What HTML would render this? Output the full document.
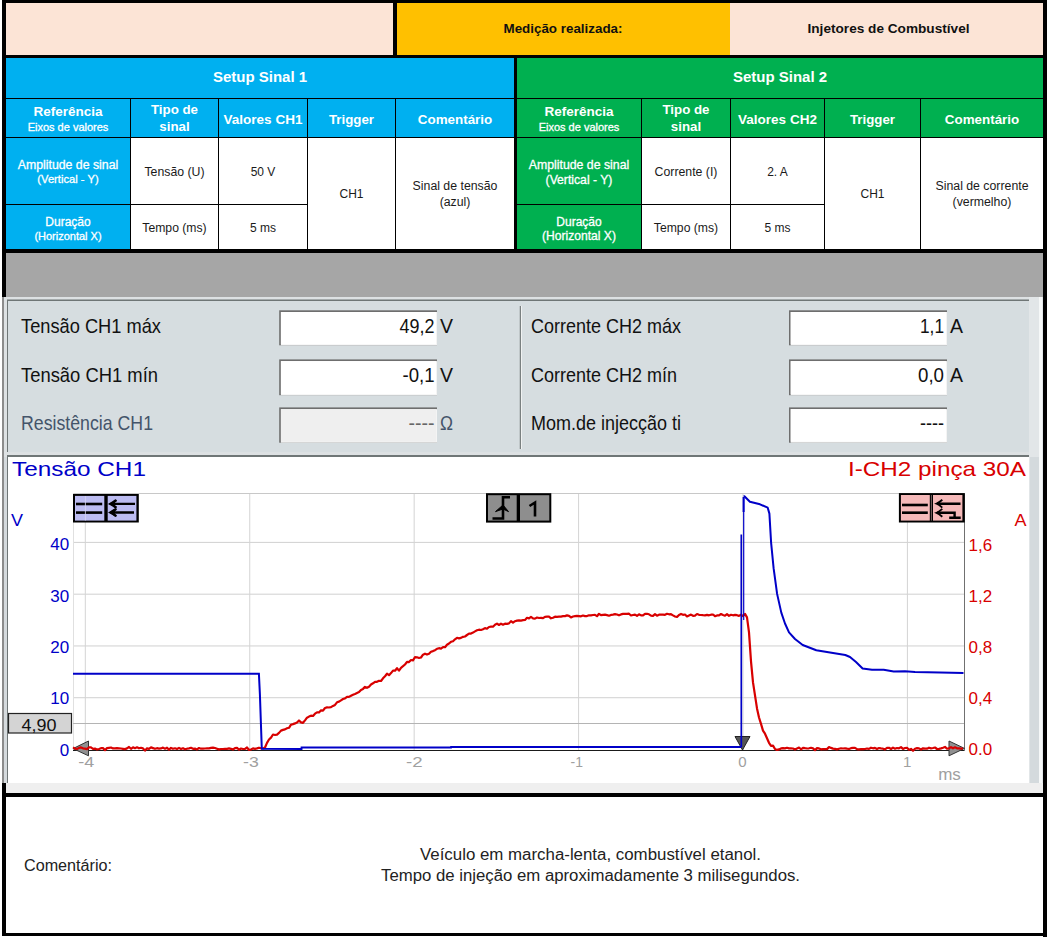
<!DOCTYPE html>
<html><head><meta charset="utf-8"><style>html,body{margin:0;padding:0;background:#fff}body{width:1048px;height:938px;overflow:hidden}svg{display:block;font-family:"Liberation Sans",sans-serif}</style></head><body>
<svg width="1048" height="938" viewBox="0 0 1048 938">
<rect x="2" y="0" width="1045" height="253" fill="#000" />
<rect x="6" y="3" width="387" height="52" fill="#fce4d6" />
<rect x="397" y="3" width="333" height="52" fill="#ffc000" />
<rect x="730" y="3" width="313" height="52" fill="#fce4d6" />
<text x="503.5" y="33" font-size="13.4" fill="#111" font-weight="bold" text-anchor="start" textLength="119" lengthAdjust="spacingAndGlyphs" >Medição realizada:</text>
<text x="807.5" y="33" font-size="13.6" fill="#111" font-weight="bold" text-anchor="start" textLength="162" lengthAdjust="spacingAndGlyphs" >Injetores de Combustível</text>
<rect x="6" y="58" width="508" height="40" fill="#00b0f0" />
<text x="260.0" y="82" font-size="15" fill="#fff" font-weight="bold" text-anchor="middle" >Setup Sinal 1</text>
<rect x="6" y="99" width="124" height="38" fill="#00b0f0" />
<rect x="6" y="138" width="124" height="66" fill="#00b0f0" />
<rect x="6" y="205" width="124" height="44" fill="#00b0f0" />
<rect x="131" y="99" width="87" height="38" fill="#00b0f0" />
<rect x="131" y="138" width="87" height="66" fill="#fff" />
<rect x="131" y="205" width="87" height="44" fill="#fff" />
<rect x="219" y="99" width="88" height="38" fill="#00b0f0" />
<rect x="219" y="138" width="88" height="66" fill="#fff" />
<rect x="219" y="205" width="88" height="44" fill="#fff" />
<rect x="308" y="99" width="87" height="38" fill="#00b0f0" />
<rect x="308" y="138" width="87" height="111" fill="#fff" />
<rect x="396" y="99" width="118" height="38" fill="#00b0f0" />
<rect x="396" y="138" width="118" height="111" fill="#fff" />
<text x="68.0" y="116" font-size="13.5" fill="#fff" font-weight="bold" text-anchor="middle" >Referência</text>
<text x="68.0" y="130.5" font-size="11" fill="#fff" text-anchor="middle" stroke="#fff" stroke-width="0.3">Eixos de valores</text>
<text x="174.5" y="114" font-size="13.3" fill="#fff" font-weight="bold" text-anchor="middle" >Tipo de</text>
<text x="174.5" y="130.5" font-size="13.3" fill="#fff" font-weight="bold" text-anchor="middle" >sinal</text>
<text x="263.0" y="123.5" font-size="13.5" fill="#fff" font-weight="bold" text-anchor="middle" >Valores CH1</text>
<text x="351.5" y="123.5" font-size="13.3" fill="#fff" font-weight="bold" text-anchor="middle" >Trigger</text>
<text x="455.0" y="123.5" font-size="13.4" fill="#fff" font-weight="bold" text-anchor="middle" >Comentário</text>
<text x="68.0" y="169" font-size="12.3" fill="#fff" text-anchor="middle" stroke="#fff" stroke-width="0.3">Amplitude de sinal</text>
<text x="68.0" y="183" font-size="11.2" fill="#fff" text-anchor="middle" stroke="#fff" stroke-width="0.3">(Vertical - Y)</text>
<text x="68.0" y="225.7" font-size="12" fill="#fff" text-anchor="middle" stroke="#fff" stroke-width="0.3">Duração</text>
<text x="68.0" y="239.6" font-size="11" fill="#fff" text-anchor="middle" stroke="#fff" stroke-width="0.3">(Horizontal X)</text>
<text x="174.5" y="176" font-size="12.3" fill="#1a1a1a" text-anchor="middle" >Tensão (U)</text>
<text x="174.5" y="232" font-size="12.2" fill="#1a1a1a" text-anchor="middle" >Tempo (ms)</text>
<text x="263.0" y="176" font-size="12" fill="#1a1a1a" text-anchor="middle" >50 V</text>
<text x="263.0" y="232" font-size="12" fill="#1a1a1a" text-anchor="middle" >5 ms</text>
<text x="351.5" y="198" font-size="12" fill="#1a1a1a" text-anchor="middle" >CH1</text>
<text x="455.0" y="190" font-size="12.3" fill="#1a1a1a" text-anchor="middle" >Sinal de tensão</text>
<text x="455.0" y="206" font-size="12.3" fill="#1a1a1a" text-anchor="middle" >(azul)</text>
<rect x="517" y="58" width="526" height="40" fill="#00b050" />
<text x="780.0" y="82" font-size="15" fill="#fff" font-weight="bold" text-anchor="middle" >Setup Sinal 2</text>
<rect x="517" y="99" width="124" height="38" fill="#00b050" />
<rect x="517" y="138" width="124" height="66" fill="#00b050" />
<rect x="517" y="205" width="124" height="44" fill="#00b050" />
<rect x="642" y="99" width="88" height="38" fill="#00b050" />
<rect x="642" y="138" width="88" height="66" fill="#fff" />
<rect x="642" y="205" width="88" height="44" fill="#fff" />
<rect x="731" y="99" width="93" height="38" fill="#00b050" />
<rect x="731" y="138" width="93" height="66" fill="#fff" />
<rect x="731" y="205" width="93" height="44" fill="#fff" />
<rect x="825" y="99" width="95" height="38" fill="#00b050" />
<rect x="825" y="138" width="95" height="111" fill="#fff" />
<rect x="921" y="99" width="122" height="38" fill="#00b050" />
<rect x="921" y="138" width="122" height="111" fill="#fff" />
<text x="579.0" y="116" font-size="13.5" fill="#fff" font-weight="bold" text-anchor="middle" >Referência</text>
<text x="579.0" y="130.5" font-size="11" fill="#fff" text-anchor="middle" stroke="#fff" stroke-width="0.3">Eixos de valores</text>
<text x="686.0" y="114" font-size="13.3" fill="#fff" font-weight="bold" text-anchor="middle" >Tipo de</text>
<text x="686.0" y="130.5" font-size="13.3" fill="#fff" font-weight="bold" text-anchor="middle" >sinal</text>
<text x="777.5" y="123.5" font-size="13.5" fill="#fff" font-weight="bold" text-anchor="middle" >Valores CH2</text>
<text x="872.5" y="123.5" font-size="13.3" fill="#fff" font-weight="bold" text-anchor="middle" >Trigger</text>
<text x="982.0" y="123.5" font-size="13.4" fill="#fff" font-weight="bold" text-anchor="middle" >Comentário</text>
<text x="579.0" y="169" font-size="12.3" fill="#fff" text-anchor="middle" stroke="#fff" stroke-width="0.3">Amplitude de sinal</text>
<text x="579.0" y="184.2" font-size="12.2" fill="#fff" text-anchor="middle" stroke="#fff" stroke-width="0.3">(Vertical - Y)</text>
<text x="579.0" y="225.7" font-size="12" fill="#fff" text-anchor="middle" stroke="#fff" stroke-width="0.3">Duração</text>
<text x="579.0" y="240" font-size="12.1" fill="#fff" text-anchor="middle" stroke="#fff" stroke-width="0.3">(Horizontal X)</text>
<text x="686.0" y="176" font-size="12.3" fill="#1a1a1a" text-anchor="middle" >Corrente (I)</text>
<text x="686.0" y="232" font-size="12.2" fill="#1a1a1a" text-anchor="middle" >Tempo (ms)</text>
<text x="777.5" y="176" font-size="12" fill="#1a1a1a" text-anchor="middle" >2. A</text>
<text x="777.5" y="232" font-size="12" fill="#1a1a1a" text-anchor="middle" >5 ms</text>
<text x="872.5" y="198" font-size="12" fill="#1a1a1a" text-anchor="middle" >CH1</text>
<text x="982.0" y="190" font-size="12.3" fill="#1a1a1a" text-anchor="middle" >Sinal de corrente</text>
<text x="982.0" y="206" font-size="12.3" fill="#1a1a1a" text-anchor="middle" >(vermelho)</text>
<rect x="2" y="253" width="4" height="44" fill="#000" />
<rect x="1043" y="253" width="4" height="44" fill="#000" />
<rect x="6" y="253" width="1037" height="44" fill="#a6a6a6" />
<rect x="1043" y="297" width="4" height="640" fill="#000" />
<rect x="2" y="783" width="4" height="153" fill="#000" />
<rect x="2" y="793" width="1045" height="4" fill="#000" />
<rect x="2" y="933" width="1045" height="3" fill="#000" />
<rect x="2" y="297" width="1041" height="160" fill="#dde1e3" />
<rect x="2" y="297" width="2" height="486" fill="#8c8c8c" />
<rect x="4" y="457" width="3" height="326" fill="#d5dadd" />
<rect x="7" y="299.5" width="1022" height="152.5" fill="#6f7676" />
<rect x="8" y="301" width="1021" height="151" fill="#d6dde0" />
<rect x="1029" y="297" width="14" height="486" fill="#e2e6e8" />
<rect x="1039" y="297" width="3" height="486" fill="#f6f8f8" />
<rect x="1030" y="457" width="9" height="326" fill="#d4dadd" />
<rect x="279.2" y="310.3" width="157.8" height="35" fill="#6e6e6e" />
<rect x="280.9" y="312.0" width="156.10000000000002" height="33.3" fill="#f4f4f4" />
<rect x="280.9" y="312.0" width="155.10000000000002" height="32.3" fill="#fff" />
<rect x="789" y="310.3" width="158" height="35" fill="#6e6e6e" />
<rect x="790.7" y="312.0" width="156.3" height="33.3" fill="#f4f4f4" />
<rect x="790.7" y="312.0" width="155.3" height="32.3" fill="#fff" />
<rect x="279.2" y="359.4" width="157.8" height="35.8" fill="#6e6e6e" />
<rect x="280.9" y="361.09999999999997" width="156.10000000000002" height="34.099999999999994" fill="#f4f4f4" />
<rect x="280.9" y="361.09999999999997" width="155.10000000000002" height="33.099999999999994" fill="#fff" />
<rect x="789" y="359.4" width="158" height="35.8" fill="#6e6e6e" />
<rect x="790.7" y="361.09999999999997" width="156.3" height="34.099999999999994" fill="#f4f4f4" />
<rect x="790.7" y="361.09999999999997" width="155.3" height="33.099999999999994" fill="#fff" />
<rect x="279.2" y="407.4" width="157.8" height="35.3" fill="#6e6e6e" />
<rect x="280.9" y="409.09999999999997" width="156.10000000000002" height="33.599999999999994" fill="#f4f4f4" />
<rect x="280.9" y="409.09999999999997" width="155.10000000000002" height="32.599999999999994" fill="#efefef" />
<rect x="789" y="407.4" width="158" height="35.3" fill="#6e6e6e" />
<rect x="790.7" y="409.09999999999997" width="156.3" height="33.599999999999994" fill="#f4f4f4" />
<rect x="790.7" y="409.09999999999997" width="155.3" height="32.599999999999994" fill="#fff" />
<line x1="520.5" y1="306" x2="520.5" y2="449" stroke="#7a8080" stroke-width="1.5" />
<line x1="521.5" y1="306" x2="521.5" y2="449" stroke="#f0f2f2" stroke-width="1" />
<text x="21" y="333" font-size="21" fill="#111" text-anchor="start" textLength="140" lengthAdjust="spacingAndGlyphs" >Tensão CH1 máx</text>
<text x="21" y="381.7" font-size="21" fill="#111" text-anchor="start" textLength="137" lengthAdjust="spacingAndGlyphs" >Tensão CH1 mín</text>
<text x="21" y="429.8" font-size="21" fill="#44546a" text-anchor="start" textLength="132" lengthAdjust="spacingAndGlyphs" >Resistência CH1</text>
<text x="434.5" y="333" font-size="21" fill="#111" text-anchor="end" textLength="35" lengthAdjust="spacingAndGlyphs" >49,2</text>
<text x="440" y="333" font-size="21" fill="#111" text-anchor="start" textLength="13" lengthAdjust="spacingAndGlyphs" >V</text>
<text x="434.5" y="381.7" font-size="21" fill="#111" text-anchor="end" textLength="32" lengthAdjust="spacingAndGlyphs" >-0,1</text>
<text x="440" y="381.7" font-size="21" fill="#111" text-anchor="start" textLength="13" lengthAdjust="spacingAndGlyphs" >V</text>
<text x="434.5" y="429.8" font-size="21" fill="#666" text-anchor="end" textLength="26" lengthAdjust="spacingAndGlyphs" >----</text>
<text x="440" y="429.8" font-size="21" fill="#44546a" text-anchor="start" textLength="13" lengthAdjust="spacingAndGlyphs" >Ω</text>
<text x="531" y="332.6" font-size="21" fill="#111" text-anchor="start" textLength="150" lengthAdjust="spacingAndGlyphs" >Corrente CH2 máx</text>
<text x="531" y="381.5" font-size="21" fill="#111" text-anchor="start" textLength="146" lengthAdjust="spacingAndGlyphs" >Corrente CH2 mín</text>
<text x="531" y="429.6" font-size="21" fill="#111" text-anchor="start" textLength="150" lengthAdjust="spacingAndGlyphs" >Mom.de injecção ti</text>
<text x="944" y="332.6" font-size="21" fill="#111" text-anchor="end" textLength="24" lengthAdjust="spacingAndGlyphs" >1,1</text>
<text x="950" y="332.6" font-size="21" fill="#111" text-anchor="start" textLength="13" lengthAdjust="spacingAndGlyphs" >A</text>
<text x="944" y="381.5" font-size="21" fill="#111" text-anchor="end" textLength="26" lengthAdjust="spacingAndGlyphs" >0,0</text>
<text x="950" y="381.5" font-size="21" fill="#111" text-anchor="start" textLength="13" lengthAdjust="spacingAndGlyphs" >A</text>
<text x="944" y="429.6" font-size="21" fill="#111" text-anchor="end" textLength="24" lengthAdjust="spacingAndGlyphs" >----</text>
<rect x="7" y="455" width="1022" height="2" fill="#6f7676" />
<rect x="7" y="455" width="1" height="328" fill="#6f7676" />
<rect x="8" y="457" width="1021" height="326" fill="#fff" />
<rect x="6" y="783" width="1037" height="10" fill="#efefef" />
<line x1="73" y1="697.725" x2="964.5" y2="697.725" stroke="#d0d0d0" stroke-width="1" />
<line x1="73" y1="645.95" x2="964.5" y2="645.95" stroke="#d0d0d0" stroke-width="1" />
<line x1="73" y1="594.175" x2="964.5" y2="594.175" stroke="#d0d0d0" stroke-width="1" />
<line x1="73" y1="542.4" x2="964.5" y2="542.4" stroke="#d0d0d0" stroke-width="1" />
<line x1="85.32000000000005" y1="493.5" x2="85.32000000000005" y2="750.3" stroke="#d4d4d4" stroke-width="1" />
<line x1="249.74" y1="493.5" x2="249.74" y2="750.3" stroke="#d4d4d4" stroke-width="1" />
<line x1="414.16" y1="493.5" x2="414.16" y2="750.3" stroke="#d4d4d4" stroke-width="1" />
<line x1="578.58" y1="493.5" x2="578.58" y2="750.3" stroke="#d4d4d4" stroke-width="1" />
<line x1="743.0" y1="493.5" x2="743.0" y2="750.3" stroke="#d4d4d4" stroke-width="1" />
<line x1="907.42" y1="493.5" x2="907.42" y2="750.3" stroke="#d4d4d4" stroke-width="1" />
<line x1="73" y1="493.5" x2="964.5" y2="493.5" stroke="#c8c8c8" stroke-width="1" />
<line x1="73.5" y1="493.5" x2="73.5" y2="750.3" stroke="#e0e0e0" stroke-width="1" />
<line x1="73" y1="723.5" x2="964.5" y2="723.5" stroke="#b4b4b4" stroke-width="1" />
<line x1="964.5" y1="493.5" x2="964.5" y2="750.3" stroke="#707070" stroke-width="1" />
<line x1="73" y1="750.5" x2="964.5" y2="750.5" stroke="#1a1a1a" stroke-width="1.2" />
<text x="69.2" y="755.5" font-size="17" fill="#0000c8" text-anchor="end" >0</text>
<text x="69.2" y="704.3" font-size="17" fill="#0000c8" text-anchor="end" >10</text>
<text x="69.2" y="653" font-size="17" fill="#0000c8" text-anchor="end" >20</text>
<text x="69.2" y="601.8" font-size="17" fill="#0000c8" text-anchor="end" >30</text>
<text x="69.2" y="550.3" font-size="17" fill="#0000c8" text-anchor="end" >40</text>
<text x="11" y="526" font-size="16" fill="#0000c8" text-anchor="start" textLength="12" lengthAdjust="spacingAndGlyphs" >V</text>
<text x="968.5" y="755.3" font-size="17" fill="#d80000" text-anchor="start" >0.0</text>
<text x="968.5" y="704.13" font-size="17" fill="#d80000" text-anchor="start" >0,4</text>
<text x="968.5" y="652.9599999999999" font-size="17" fill="#d80000" text-anchor="start" >0,8</text>
<text x="968.5" y="601.79" font-size="17" fill="#d80000" text-anchor="start" >1,2</text>
<text x="968.5" y="550.6199999999999" font-size="17" fill="#d80000" text-anchor="start" >1,6</text>
<text x="1014.5" y="526" font-size="16" fill="#d80000" text-anchor="start" textLength="12" lengthAdjust="spacingAndGlyphs" >A</text>
<text x="86.2" y="766.5" font-size="15" fill="#a0a0a0" text-anchor="middle" textLength="16" lengthAdjust="spacingAndGlyphs" >-4</text>
<text x="250.9" y="766.5" font-size="15" fill="#a0a0a0" text-anchor="middle" textLength="15.7" lengthAdjust="spacingAndGlyphs" >-3</text>
<text x="414.3" y="766.5" font-size="15" fill="#a0a0a0" text-anchor="middle" textLength="16.6" lengthAdjust="spacingAndGlyphs" >-2</text>
<text x="576.8" y="766.5" font-size="15" fill="#a0a0a0" text-anchor="middle" textLength="12.4" lengthAdjust="spacingAndGlyphs" >-1</text>
<text x="742.4" y="766.5" font-size="15" fill="#a0a0a0" text-anchor="middle" >0</text>
<text x="907.2" y="766.5" font-size="15" fill="#a0a0a0" text-anchor="middle" >1</text>
<text x="949.5" y="779.5" font-size="17" fill="#a0a0a0" text-anchor="middle" >ms</text>
<text x="12" y="476" font-size="21" fill="#0000c8" text-anchor="start" textLength="134" lengthAdjust="spacingAndGlyphs" >Tensão CH1</text>
<text x="1026" y="476" font-size="21" fill="#d80000" text-anchor="end" textLength="178" lengthAdjust="spacingAndGlyphs" >I-CH2 pinça 30A</text>
<path d="M73,748.6 L88.5,741 L88.5,755.8 Z" fill="#909090" stroke="#333" stroke-width="1"/>
<path d="M949,741 L964.5,748.4 L949,755.8 Z" fill="#909090" stroke="#333" stroke-width="1"/>
<path d="M735,736.5 L750,736.5 L742.5,750 Z" fill="#555" stroke="#222" stroke-width="1"/>
<path d="M73.0,747.4 L75.0,748.6 L77.0,749.0 L79.0,747.9 L81.0,747.4 L83.0,748.3 L85.0,748.6 L87.0,749.1 L89.0,747.4 L91.0,747.4 L93.0,748.8 L95.0,748.6 L97.0,749.4 L99.0,749.0 L101.0,748.2 L103.0,748.1 L105.0,750.1 L107.0,748.1 L109.0,747.8 L111.0,747.5 L113.0,748.4 L115.0,748.4 L117.0,748.1 L119.0,748.3 L121.0,748.5 L123.0,748.8 L125.0,749.1 L127.0,748.4 L129.0,747.0 L131.0,748.8 L133.0,747.3 L135.0,748.2 L137.0,747.3 L139.0,748.3 L141.0,747.8 L143.0,748.4 L145.0,750.6 L147.0,748.3 L149.0,748.9 L151.0,747.4 L153.0,748.1 L155.0,748.8 L157.0,748.2 L159.0,748.6 L161.0,748.4 L163.0,747.6 L165.0,748.7 L167.0,747.7 L169.0,749.6 L171.0,747.9 L173.0,748.8 L175.0,748.3 L177.0,749.0 L179.0,747.9 L181.0,749.0 L183.0,748.2 L185.0,749.2 L187.0,748.7 L189.0,748.4 L191.0,747.8 L193.0,748.8 L195.0,748.6 L197.0,749.4 L199.0,748.0 L201.0,748.7 L203.0,748.7 L205.0,748.5 L207.0,748.4 L209.0,748.4 L211.0,747.9 L213.0,747.6 L215.0,748.0 L217.0,748.7 L219.0,749.4 L221.0,749.0 L223.0,749.0 L225.0,748.8 L227.0,748.8 L229.0,748.4 L231.0,748.8 L233.0,749.5 L235.0,748.1 L237.0,747.8 L239.0,749.7 L241.0,748.5 L243.0,749.0 L245.0,748.9 L247.0,747.5 L249.0,750.0 L251.0,749.5 L253.0,748.4 L255.0,748.8 L257.0,748.4 L259.0,747.7 L261.0,748.2 L263.0,748.5 L265.0,747.5 L267.0,742.9 L269.0,739.5 L271.0,737.6 L273.0,734.5 L275.0,735.0 L277.0,734.6 L279.0,732.9 L281.0,730.6 L283.0,729.9 L285.0,729.4 L287.0,728.3 L289.0,727.8 L291.0,724.7 L293.0,724.1 L295.0,723.4 L297.0,722.5 L299.0,720.5 L301.0,722.4 L303.0,722.8 L305.0,720.4 L307.0,717.7 L309.0,716.6 L311.0,715.7 L313.0,716.0 L315.0,713.7 L317.0,712.4 L319.0,712.4 L321.0,710.3 L323.0,710.7 L325.0,708.0 L327.0,707.4 L329.0,707.5 L331.0,707.2 L333.0,705.9 L335.0,704.9 L337.0,702.3 L339.0,701.6 L341.0,700.3 L343.0,699.0 L345.0,698.4 L347.0,696.9 L349.0,696.9 L351.0,695.7 L353.0,694.7 L355.0,693.9 L357.0,692.9 L359.0,692.0 L361.0,689.9 L363.0,688.9 L365.0,686.9 L367.0,687.8 L369.0,686.7 L371.0,684.5 L373.0,683.3 L375.0,681.8 L377.0,681.8 L379.0,680.8 L381.0,681.0 L383.0,678.3 L385.0,676.2 L387.0,673.7 L389.0,675.2 L391.0,673.1 L393.0,670.6 L395.0,670.7 L397.0,668.2 L399.0,670.6 L401.0,667.8 L403.0,666.2 L405.0,664.5 L407.0,661.9 L409.0,662.1 L411.0,660.0 L413.0,660.3 L415.0,657.2 L417.0,657.3 L419.0,658.0 L421.0,657.5 L423.0,654.7 L425.0,653.7 L427.0,654.6 L429.0,653.8 L431.0,651.7 L433.0,651.1 L435.0,650.2 L437.0,648.8 L439.0,648.2 L441.0,648.6 L443.0,647.2 L445.0,647.2 L447.0,644.7 L449.0,643.5 L451.0,641.8 L453.0,641.2 L455.0,639.3 L457.0,637.8 L459.0,638.4 L461.0,637.9 L463.0,636.8 L465.0,636.5 L467.0,635.0 L469.0,633.7 L471.0,633.6 L473.0,632.6 L475.0,631.4 L477.0,630.3 L479.0,629.7 L481.0,630.0 L483.0,629.3 L485.0,628.1 L487.0,628.7 L489.0,627.0 L491.0,626.7 L493.0,626.7 L495.0,624.8 L497.0,623.6 L499.0,625.0 L501.0,623.7 L503.0,624.7 L505.0,623.7 L507.0,623.9 L509.0,623.4 L511.0,621.1 L513.0,622.7 L515.0,621.2 L517.0,620.6 L519.0,620.3 L521.0,620.6 L523.0,620.2 L525.0,619.9 L527.0,617.8 L529.0,618.4 L531.0,616.9 L533.0,618.3 L535.0,618.6 L537.0,617.5 L539.0,618.0 L541.0,617.8 L543.0,618.2 L545.0,616.8 L547.0,616.7 L549.0,616.6 L551.0,618.3 L553.0,617.7 L555.0,616.7 L557.0,616.8 L559.0,616.6 L561.0,616.6 L563.0,616.2 L565.0,616.1 L567.0,615.4 L569.0,615.8 L571.0,617.4 L573.0,616.5 L575.0,616.2 L577.0,615.9 L579.0,616.1 L581.0,616.3 L583.0,615.5 L585.0,616.1 L587.0,616.1 L589.0,615.3 L591.0,615.3 L593.0,615.0 L595.0,614.9 L597.0,616.2 L599.0,613.8 L601.0,615.2 L603.0,614.8 L605.0,614.7 L607.0,615.1 L609.0,615.7 L611.0,614.9 L613.0,614.6 L615.0,614.2 L617.0,614.5 L619.0,615.3 L621.0,614.4 L623.0,613.9 L625.0,613.8 L627.0,613.9 L629.0,613.7 L631.0,615.5 L633.0,615.0 L635.0,614.6 L637.0,615.8 L639.0,614.3 L641.0,615.4 L643.0,615.4 L645.0,613.8 L647.0,613.8 L649.0,614.3 L651.0,615.6 L653.0,615.8 L655.0,614.1 L657.0,615.7 L659.0,614.7 L661.0,614.7 L663.0,614.6 L665.0,614.8 L667.0,613.8 L669.0,614.3 L671.0,614.2 L673.0,615.4 L675.0,616.5 L677.0,617.0 L679.0,614.9 L681.0,613.9 L683.0,614.8 L685.0,614.5 L687.0,616.5 L689.0,615.5 L691.0,614.6 L693.0,615.8 L695.0,615.6 L697.0,614.0 L699.0,614.8 L701.0,615.0 L703.0,615.2 L705.0,615.3 L707.0,614.9 L709.0,615.3 L711.0,614.7 L713.0,614.5 L715.0,616.2 L717.0,615.4 L719.0,615.4 L721.0,614.0 L723.0,615.0 L725.0,615.7 L727.0,614.2 L729.0,615.8 L731.0,614.8 L733.0,615.3 L735.0,614.9 L737.0,615.2 L739.0,615.9 L741.0,614.7 L743.0,616.1 L745.0,613.9 L747.0,617.4 L749.0,632.3 L751.0,661.4 L753.0,682.4 L755.0,695.4 L757.0,708.4 L759.0,717.5 L761.0,723.9 L763.0,730.6 L765.0,733.7 L767.0,738.2 L769.0,742.8 L771.0,745.8 L773.0,745.6 L775.0,749.0 L777.0,749.9 L779.0,749.4 L781.0,748.4 L783.0,748.2 L785.0,748.4 L787.0,747.8 L789.0,748.4 L791.0,748.4 L793.0,748.5 L795.0,749.4 L797.0,748.4 L799.0,747.5 L801.0,749.3 L803.0,747.8 L805.0,748.2 L807.0,748.5 L809.0,748.3 L811.0,747.8 L813.0,748.4 L815.0,750.1 L817.0,748.1 L819.0,748.4 L821.0,749.3 L823.0,749.0 L825.0,749.1 L827.0,749.1 L829.0,747.1 L831.0,747.9 L833.0,748.6 L835.0,748.9 L837.0,749.4 L839.0,748.8 L841.0,748.3 L843.0,748.5 L845.0,748.3 L847.0,748.7 L849.0,749.0 L851.0,748.2 L853.0,747.9 L855.0,747.9 L857.0,749.2 L859.0,749.4 L861.0,749.2 L863.0,749.1 L865.0,749.0 L867.0,748.5 L869.0,748.9 L871.0,747.7 L873.0,748.3 L875.0,747.9 L877.0,748.9 L879.0,748.0 L881.0,748.4 L883.0,748.7 L885.0,749.4 L887.0,747.9 L889.0,747.8 L891.0,749.0 L893.0,747.6 L895.0,748.7 L897.0,748.0 L899.0,748.3 L901.0,747.1 L903.0,748.9 L905.0,748.0 L907.0,747.8 L909.0,749.8 L911.0,748.9 L913.0,750.8 L915.0,748.7 L917.0,748.1 L919.0,748.4 L921.0,749.5 L923.0,748.3 L925.0,748.7 L927.0,748.7 L929.0,747.7 L931.0,748.4 L933.0,748.0 L935.0,747.5 L937.0,749.0 L939.0,748.8 L941.0,748.4 L943.0,747.7 L945.0,746.9 L947.0,748.7 L949.0,748.3 L951.0,747.1 L953.0,748.3 L955.0,747.3 L957.0,748.3 L959.0,748.4 L961.0,748.6 L963.0,748.5" fill="none" stroke="#d80000" stroke-width="2.2" stroke-linejoin="round"/>
<path d="M73.0,673.7 L258.9,673.7 L259.9,694.4 L261.8,748.7 L301.5,749.0 L301.6,747.6 L451.0,747.4 L451.1,746.9 L741.2,746.9" fill="none" stroke="#0000c8" stroke-width="2" stroke-linejoin="miter"/>
<line x1="741.3" y1="747" x2="741.3" y2="534.5" stroke="#0000c8" stroke-width="1.7" />
<line x1="743.7" y1="620" x2="743.7" y2="497" stroke="#0000c8" stroke-width="1.2" />
<line x1="743.6" y1="497" x2="743.6" y2="512" stroke="#0000c8" stroke-width="2" />
<path d="M743.6,496.5 L744.4,496.3 L749.9,501.8 L760.0,504.3 L767.7,507.7 L769.4,513.6 L771.1,542.6 L773.6,568.2 L777.1,593.9 L781.3,612.6 L785.0,623.5 L789.0,632.3 L795.0,639.0 L802.7,645.0 L816.3,650.2 L830.0,652.6 L845.3,655.0 L850.0,657.0 L856.0,662.0 L862.6,668.5 L872.0,669.8 L883.7,669.8 L893.7,671.5 L905.0,671.2 L915.0,672.0 L940.0,672.6 L963.5,673.0" fill="none" stroke="#0000c8" stroke-width="2" stroke-linejoin="round"/>
<rect x="8.5" y="713.5" width="63" height="19.5" fill="#d4d4d4" stroke="#222" stroke-width="1.2"/>
<text x="39" y="730.8" font-size="17" fill="#111" text-anchor="middle" textLength="35" lengthAdjust="spacingAndGlyphs" >4,90</text>
<rect x="73" y="494" width="65.80000000000001" height="28.5" fill="#000" />
<rect x="75" y="495.9" width="29.299999999999997" height="24.7" fill="#bcbcf2" />
<rect x="107.7" y="495.9" width="28.70000000000001" height="24.7" fill="#bcbcf2" />
<rect x="76" y="502.7" width="26.2" height="2.6" fill="#000" />
<rect x="76" y="511.3" width="26.2" height="2.6" fill="#000" />
<path d="M135,503.9 L111.5,503.9 M116,500.3 Q113,502.5 110.5,503.9 Q113,505.3 116,507.5 M134,512.5 L111.5,512.5 M116,509 Q113,511 110.5,512.5 Q113,514 116,516" fill="none" stroke="#000" stroke-width="2.4"/>
<path d="M116.5,500 Q113,503 110.8,503.9 Q113,504.8 116.5,507.8 M116.5,508.6 Q113,511.6 110.8,512.5 Q113,513.4 116.5,516.4" fill="none" stroke="#000" stroke-width="1.9"/>
<line x1="85.4" y1="496" x2="85.4" y2="520.5" stroke="#d8d8f4" stroke-width="0.8" />
<rect x="898.9" y="493.1" width="65.89999999999998" height="29.399999999999977" fill="#000" />
<rect x="900.9" y="495.0" width="28.899999999999977" height="25.599999999999977" fill="#f5b9b9" />
<rect x="933" y="495.0" width="29.399999999999956" height="25.599999999999977" fill="#f5b9b9" />
<line x1="931.4" y1="495" x2="931.4" y2="520.6" stroke="#b09090" stroke-width="0.7" />
<rect x="902" y="503.7" width="25.8" height="2.6" fill="#000" />
<rect x="902" y="511.4" width="25.8" height="2.6" fill="#000" />
<path d="M960.5,503.7 L937,503.7 M955.8,512.8 L937,512.8 M954.6,512.8 L954.6,518 M949.2,517.8 L960.7,517.8" fill="none" stroke="#000" stroke-width="2.4"/>
<path d="M942.3,499.8 Q938.8,502.8 936.6,503.7 Q938.8,504.6 942.3,507.6 M942.3,508.9 Q938.8,511.9 936.6,512.8 Q938.8,513.7 942.3,516.7" fill="none" stroke="#000" stroke-width="1.9"/>
<rect x="486" y="493.2" width="65.3" height="29.4" fill="#000" />
<rect x="488" y="495.2" width="28.7" height="25.4" fill="#8e8e8e" />
<rect x="520" y="495.2" width="29.3" height="25.4" fill="#8e8e8e" />
<path d="M492.5,518.5 L503,518.5 L503,497.3 L510,497.3" fill="none" stroke="#000" stroke-width="2.6"/>
<path d="M495.5,511.6 L503,505 L508.5,511.6 L503,509 Z" fill="#000" stroke="#000" stroke-width="1"/>
<path d="M529.5,506 L535,502.5 L535,516.5" fill="none" stroke="#000" stroke-width="2.6"/>
<text x="24" y="870.5" font-size="16" fill="#222" text-anchor="start" textLength="88" lengthAdjust="spacingAndGlyphs" >Comentário:</text>
<text x="590.5" y="859.8" font-size="16" fill="#222" text-anchor="middle" textLength="341" lengthAdjust="spacingAndGlyphs" >Veículo em marcha-lenta, combustível etanol.</text>
<text x="590.5" y="880.9" font-size="16" fill="#222" text-anchor="middle" textLength="419" lengthAdjust="spacingAndGlyphs" >Tempo de injeção em aproximadamente 3 milisegundos.</text>
</svg></body></html>
